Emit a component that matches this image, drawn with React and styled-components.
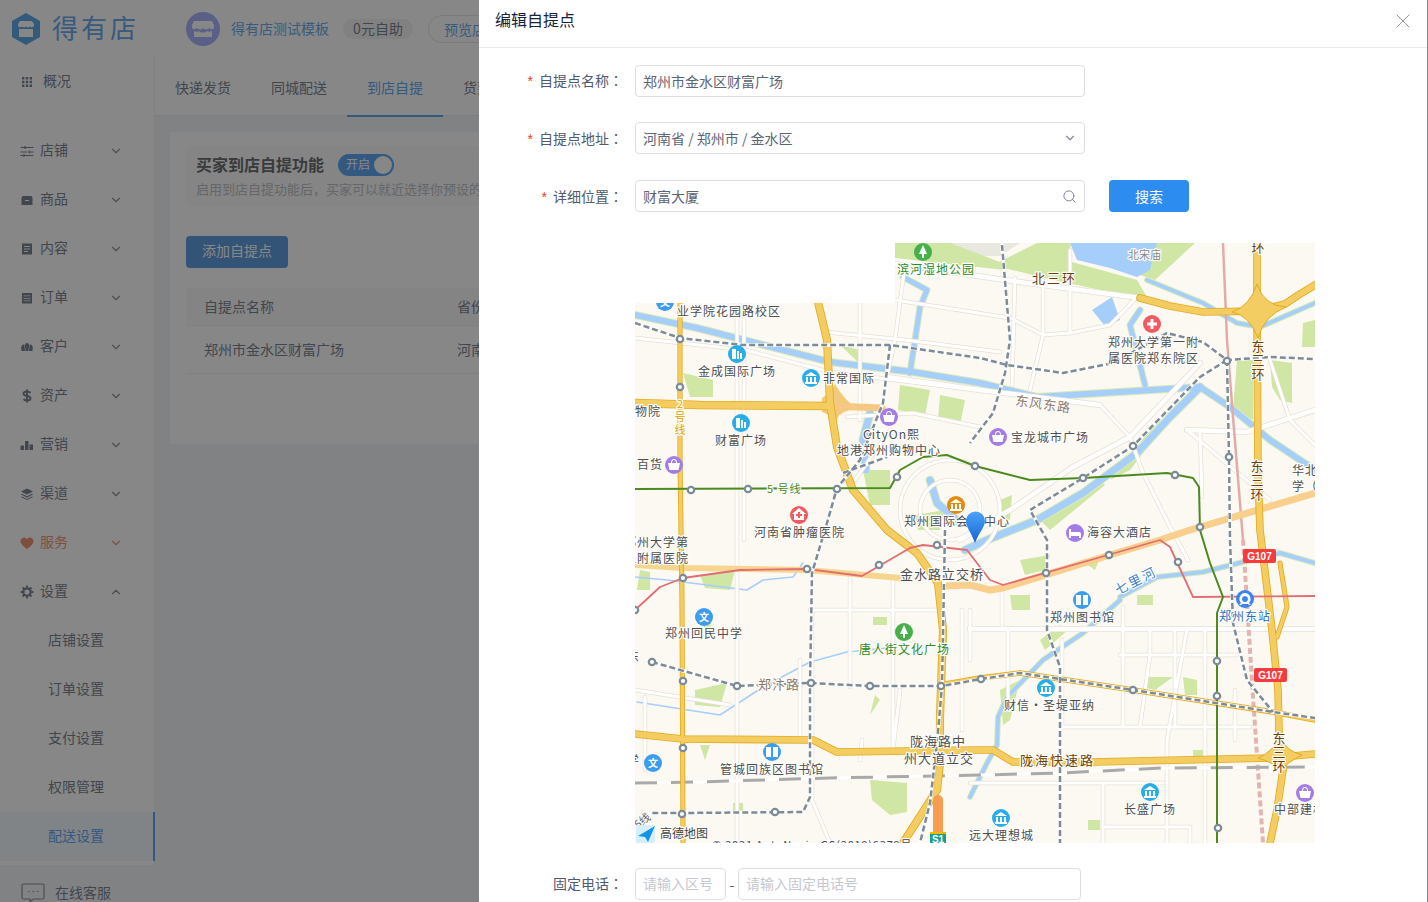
import React from 'react';
import styled, { createGlobalStyle } from 'styled-components';
import { ChevronDown, ChevronUp, X, Search } from 'lucide-react';

const FONT = '"Noto Sans CJK SC", "Noto Sans", "Liberation Sans", sans-serif';

const Global = createGlobalStyle`
  html, body { margin: 0; padding: 0; height: 100%; overflow: hidden; background: #fff; }
  * { box-sizing: border-box; }
  body { font-family: ${FONT}; font-size: 14px; color: #515a6e; text-spacing-trim: space-all; }
`;

const Page = styled.div`position: relative; width: 1428px; height: 902px; overflow: hidden; background: #f0f3f8;`;
const TopBar = styled.header`display: flex; align-items: center; height: 57px; background: #fff; padding-left: 12px;`;
const LogoText = styled.span`margin: -4px 0 0 12px; font-size: 26px; letter-spacing: 3px; color: #3a8ee6; width: 134px; white-space: nowrap;`;
const ShopName = styled.span`margin: -2px 0 0 11px; color: #3a8ee6; font-size: 14px;`;
const Plan = styled.span`margin-left: 14px; width: 70px; height: 20px; border-radius: 10px; background: #f0f0f0; color: #515a6e; font-size: 14px; line-height: 18px; text-align: center;`;
const Preview = styled.span`margin-left: 15px; padding: 0 15px; height: 28px; line-height: 26px; border: 1px solid #dcdee2; border-radius: 14px; color: #3a8ee6; white-space: nowrap;`;
const Body = styled.div`display: flex; height: 845px;`;
const SideColumn = styled.aside`width: 155px; flex: none; display: flex; flex-direction: column;`;
const Nav = styled.nav`height: 812px; background: #fff; border-right: 1px solid #eceef2; display: flex; flex-direction: column;`;
const NavItem = styled.div`
  display: flex; align-items: center; height: 49px; flex: none; padding-left: 20px;
  color: ${p => p.$hot ? '#e8734a' : '#515a6e'};
  margin-bottom: ${p => p.$gapAfter ? '20px' : 0};
  svg.side { flex: none; }
`;
const NavLabel = styled.span`margin: -4px 0 0 ${p => p.$wide ? '9px' : '6px'}; width: 56px; font-size: 14px;`;
const NavChevron = styled.span`display: flex; margin-left: 13px; color: #6b7280;`;
const SubItem = styled.div`
  height: 49px; flex: none; padding-left: 48px; line-height: 47px; font-size: 14px; width: 155px; margin-right: -1px;
  color: ${p => p.$active ? '#2d8cf0' : '#515a6e'};
  background: ${p => p.$active ? '#f0f7ff' : 'transparent'};
  border-right: ${p => p.$active ? '2px solid #2d8cf0' : '0 solid transparent'};
`;
const Service = styled.div`display: flex; align-items: center; padding: 17px 0 0 21px; color: #515a6e; gap: 10px; white-space: nowrap;`;
const Main = styled.main`flex: 1; min-width: 0;`;
const Tabs = styled.div`display: flex; height: 59px; background: #fff; border-bottom: 1px solid #dfe3e8;`;
const Tab = styled.div`
  width: 96px; height: 60px; line-height: 60px; text-align: center; font-size: 14px; flex: none;
  color: ${p => p.$active ? '#2d8cf0' : '#515a6e'};
  border-bottom: ${p => p.$active ? '2px solid #2d8cf0' : '0'};
`;
const Card = styled.section`margin: 16px 16px 0 15px; height: 312px; background: #fff; border-radius: 4px; padding: 14px 16px;`;
const Notice = styled.div`height: 60px; background: #fafafa; padding: 7px 10px; border-radius: 4px;`;
const TitleLine = styled.div`display: flex; align-items: center; height: 22px;`;
const Heading = styled.h3`margin: 0; font-size: 16px; font-weight: 700; color: #3c3f45;`;
const Toggle = styled.div`
  position: relative; margin: 2px 0 0 14px; width: 56px; height: 22px; border-radius: 11px; background: #2d8cf0;
  color: #fff; font-size: 12px; line-height: 20px; padding-left: 8px;
  &::after { content: ''; position: absolute; right: 2px; top: 2px; width: 18px; height: 18px; border-radius: 50%; background: #fff; }
`;
const Hint = styled.p`margin: 5px 0 0; font-size: 13px; line-height: 18px; color: #a8acb3; white-space: nowrap;`;
const AddButton = styled.div`margin-top: 30px; width: 102px; height: 32px; line-height: 28px; border-radius: 4px; text-align: center; color: #fff; background: #2d80d8; font-size: 14px;`;
const Table = styled.div`margin-top: 20px;`;
const TableRow = styled.div`
  display: flex; align-items: center; height: ${p => p.$head ? '38px' : '48px'}; padding-bottom: 2px;
  background: ${p => p.$head ? '#f8f8f9' : '#fff'}; border-bottom: 1px solid #e8eaec; white-space: nowrap; overflow: hidden;
`;
const Cell = styled.div`width: ${p => p.$w}px; flex: none; padding-left: ${p => p.$pl}px;`;

const Mask = styled.div`position: absolute; inset: 0; background: rgba(55,55,55,.6);`;
const Dialog = styled.div`position: absolute; left: 479px; top: 0; width: 948px; height: 902px; background: #fff; overflow: hidden;`;
const DialogHead = styled.div`position: relative; height: 48px; border-bottom: 1px solid #e8eaec; padding: 8px 16px; font-size: 16px; line-height: 22px; color: #17233d;`;
const Close = styled.span`position: absolute; right: 12px; top: 9px; display: flex; color: #999;`;
const Form = styled.div`display: flex; flex-direction: column; padding-top: 17px;`;
const Row = styled.div`display: flex; align-items: center; height: 32px; margin-top: ${p => p.$mt ?? 0}px;`;
const Label = styled.label`width: 156px; flex: none; padding: 0 12px ${p => p.$up ? 2 : 0}px 0; text-align: right; font-size: 14px; line-height: 30px; color: #515a6e; white-space: nowrap; &::before { content: ${p => p.$req ? "'*'" : "''"}; color: #ed4014; margin-right: 6px; font-family: "Liberation Sans", sans-serif; }`;
const Colon = styled.span`font-family: "Noto Sans CJK TC", sans-serif;`;
const Field = styled.div`
  display: flex; align-items: center; justify-content: space-between; height: 32px; width: ${p => p.$w}px; padding: 0 7px ${p => p.$ph ? 2 : 0}px 7px; flex: none;
  border: 1px solid #dcdee2; border-radius: 4px; background: #fff; font-size: 14px; line-height: 28px;
  color: ${p => p.$ph ? '#c5c8ce' : '#5c6477'};
  svg { color: #808695; }
`;
const SearchBtn = styled.div`margin-left: 24px; width: 80px; height: 32px; line-height: 32px; text-align: center; border-radius: 4px; background: #2d8cf0; color: #fff; font-size: 14px;`;
const MapFrame = styled.svg`display: block; margin: 31px 0 0 156px; width: 680px; height: 600px; font-family: ${FONT};`;
const Dash = styled.span`width: 12px; text-align: center; color: #515a6e;`;

const Stroke = styled.polyline`
  fill: none; stroke: ${p => p.$c}; stroke-width: ${p => p.$w}; stroke-linecap: ${p => p.$dash ? 'butt' : 'round'}; stroke-linejoin: round;
  stroke-dasharray: ${p => p.$dash || 'none'};
`;
const Patch = styled.polygon`fill: ${p => p.$c || '#cfe6a4'}; stroke: none;`;
const Blob = styled.path`fill: ${p => p.$c}; stroke: ${p => p.$s || 'none'}; stroke-width: 1;`;
const Station = styled.circle`fill: #fff; stroke: #7c8b95; stroke-width: 2.2;`;
const MapText = styled.text`
  font-size: ${p => p.$s || 12}px; letter-spacing: ${p => p.$ls ?? 1}px; fill: ${p => p.$c || '#4e4e4e'};
  stroke: rgba(255,255,255,.92); stroke-width: 2.4px; paint-order: stroke; stroke-linejoin: round;
  writing-mode: ${p => p.$v ? 'vertical-rl' : 'horizontal-tb'};
  text-orientation: upright;
`;
const PoiDisc = styled.circle`fill: ${p => p.$c};`;
const Glyph = styled.text`font-size: 10px; fill: #fff; text-anchor: middle; font-weight: 700;`;
const Shield = styled(Glyph)`font-family: "Liberation Sans", sans-serif;`;
const WhiteMark = styled.path`fill: #fff;`;
const LogoBadge = styled.svg`flex: none; display: block;`;

const ring = (cx, cy, r) => Array.from({ length: 41 }, (_, i) => {
  const a = (i / 40) * Math.PI * 2;
  return `${(cx + r * Math.cos(a)).toFixed(1)},${(cy + r * Math.sin(a)).toFixed(1)}`;
}).join(' ');

const majors = [
  ['1140,298 1170,306 1203,312 1257,311 1285,304 1300,294 1315,285', 6],
  ['1257,243 1257,320 1258,470 1260,530 1266,580 1272,630 1278,690 1279,730 1283,770 1277,810 1270,843', 6],
  ['1280,563 1287,607 1277,637', 3.5],
  ['818,302 827,340 830,403 837,447 853,490 887,530 917,553 938,583 943,630 940,717 940,763 937,790 910,832 903,843', 6.5],
  ['635,403 700,405 830,406', 7],
  ['680,303 680,460 682,600 683,843', 3.5],
  ['635,734 683,739 813,740 837,752 980,750 993,750 1013,762 1093,762 1270,758 1315,754', 6],
  ['940,685 980,678 1020,673 1133,690 1273,712 1315,720', 4],
];
const softRoads = [
  ['635,565 683,568 807,570 900,578', 6, '#f6d68e'],
  ['945,586 970,585 990,590 1003,588 1110,555 1160,540 1190,530 1315,493', 7, '#f8cf8d'],
  ['832,406 882,408', 7, '#f5c883'],
];
const rivers = [
  ['635,315 697,328 830,362 913,372 980,383 1037,397 1103,393 1200,387 1230,407 1270,440 1315,470', 6],
  ['1200,387 1170,417 1137,453 1083,493 1037,520 987,540 965,550', 7],
  ['1147,280 1203,303 1237,323 1260,327 1315,303', 4],
  ['903,277 927,290 920,307 913,353 910,373', 5],
  ['870,413 863,440 866,470', 7],
  ['930,480 937,503 960,523', 7],
  ['1120,597 1157,577 1203,572 1243,562 1280,553 1315,563', 4],
  ['1120,600 1083,633 1043,660 1007,697 998,717 997,745 987,763 970,797', 4],
  ['1140,310 1130,325 1145,385', 5],
];
const streams = [
  '635,577 667,580 747,590 763,580 793,577 803,563',
  '637,702 720,715 763,687 810,662 847,652 897,647',
  '1320,565 1275,553',
];
const wideLanes = [
  '895,264 1005,280 1140,298', '1200,363 1130,437 1073,467 1010,510 960,540', '970,629 1315,629', '887,377 980,390 1100,405', '1187,430 1247,432 1315,410',
];
const lanes = [
  '895,300 1010,318 1043,335 1070,333 1110,325 1137,297',
  '635,338 745,350 830,372 960,388', '825,332 905,340 1000,352', '1100,405 1130,437 1143,473 1170,527 1188,560',
  '847,417 913,413 980,427', '1200,430 1202,497',
  '810,610 940,610', '850,577 850,687', '893,580 893,747', '737,303 737,843', '744,303 744,540', '812,610 812,800',
  '1120,655 1237,655', '1062,727 1250,727', '1123,607 1123,727', '1150,629 1150,655 1140,727', '1187,629 1167,740 1167,843',
  '970,783 1163,783', '1103,783 1103,843', '1103,827 1190,827', '1190,827 1190,843', '635,690 730,705', '645,697 645,770',
  '1187,430 1270,500', '860,300 860,420', '905,265 895,340 887,377', '1043,280 1043,335 1030,390', '1070,250 1070,333', '1015,278 1012,385',
  '1270,360 1290,420 1315,445', '1008,700 1008,630', '1062,640 1062,727', '1175,629 1175,727', '1205,629 1205,843', '970,610 970,660',
  '1002,585 1002,625', '962,610 962,730', '800,660 800,740', '900,690 893,750', '862,740 860,760', '812,800 830,843', '855,480 890,430', '1235,690 1235,740',
  ring(950, 510, 50), ring(950, 510, 30),
];
const metro = [
  '635,323 680,338 743,345 890,345 980,358 1007,365 1063,373 1113,363 1167,333 1203,342 1227,360 1270,357 1315,359',
  '1002,245 1010,340 1005,373 993,413 970,443',
  '890,345 883,403 860,460 837,488 827,523 812,573 810,683 810,797 803,812 682,813 650,813',
  '843,473 887,457',
  '1227,360 1200,377 1133,446 1083,478 1030,510 1047,540 1047,630 1060,667 1060,843',
  '1227,360 1229,457 1230,540 1233,623 1247,680 1273,712',
  '652,662 737,686 810,683 870,686 942,686 981,679 1020,673 1133,690 1273,712 1315,718',
  '945,530 942,686 937,743 930,803 920,843',
];
const stations = [
  [680,339],[680,387],[691,490],[748,489],[837,489],[897,477],[975,466],[1227,361],[1133,446],[1229,457],[1083,478],[1175,475],[1200,527],
  [635,610],[683,578],[807,569],[879,565],[937,545],[652,662],[683,681],[737,686],[811,683],[870,686],[941,686],[683,748],[682,814],[775,812],
  [1109,555],[1046,573],[1178,562],[1217,661],[1217,696],[981,679],[1133,690],[1218,828],
];
const greens = [
  '895,243 950,243 1000,262 1005,270 895,258','993,265 1037,243 1070,243 1072,262 1137,280 1147,297 1100,290 1040,277','1157,243 1195,243 1155,280 1140,275',
  '1237,360 1253,360 1253,420 1233,410','1270,360 1292,363 1292,403 1280,400 1272,387','1303,323 1315,320 1315,347 1302,347',
  '683,373 713,380 713,397 690,397','863,470 890,470 890,505 870,505','900,385 930,390 925,415 898,410','940,395 965,400 960,425 938,420','840,345 860,350 858,362',
  '873,617 887,617 887,625 873,625','870,780 907,783 907,812 890,815 872,800','733,803 743,803 743,813 733,813','695,690 727,683 720,707 695,705',
  '1147,677 1173,677 1155,690 1147,688','1183,677 1197,680 1197,695 1185,695','1088,820 1100,820 1100,830 1088,830','1193,750 1205,750 1205,757 1193,757',
  '1137,595 1153,595 1153,605 1137,605','640,570 650,572 650,590 637,590','700,575 735,570 730,590 705,588','1010,595 1030,595 1030,610 1012,610','1080,560 1100,558 1095,570',
  '1110,480 1150,430 1160,420 1165,425 1130,470','1040,520 1100,480 1105,485 1050,530','915,515 945,510 940,530 918,530','1000,500 1012,495 1010,520 1002,518',
  '875,695 880,700 870,715','700,745 710,745 705,760','702,620 712,618 708,640','1040,640 1060,625 1068,630 1045,650','1000,690 1020,680 1010,720 1003,725','1020,560 1050,555 1045,570 1025,575',
];

const Poi = ({ x, y, c, kind }) => (
  <g>
    <PoiDisc cx={x} cy={y} r={9} $c={c} />
    {kind === 'wen' && <Glyph x={x} y={y + 4}>文</Glyph>}
    {kind === 'plus' && <WhiteMark d={`M${x-5} ${y-1.5}h3.5v-3.5h3v3.5h3.5v3h-3.5v3.5h-3v-3.5h-3.5z`} />}
    {kind === 'tree' && <WhiteMark d={`M${x} ${y-7}l4 9h-3v4h-2v-4h-3z`} />}
    {kind === 'tower' && <WhiteMark d={`M${x-5} ${y+5}v-10h4v10zM${x} ${y+5}v-8h2v8zM${x+3} ${y+5}v-6h2v6z`} />}
    {kind === 'bank' && <WhiteMark d={`M${x} ${y-6}l6 4h-12zM${x-5} ${y-1}h2v5h-2zM${x-1} ${y-1}h2v5h-2zM${x+3} ${y-1}h2v5h-2zM${x-6} ${y+4}h12v2h-12z`} />}
    {kind === 'bag' && <WhiteMark d={`M${x-6} ${y-2}h12l-1.5 7h-9zM${x-3} ${y-2}a3 4 0 0 1 6 0h-1a2 3 0 0 0-4 0z`} />}
    {kind === 'bed' && <WhiteMark d={`M${x-6} ${y-4}h2v3h8a2 2 0 0 1 2 2v4h-2v-2h-8v2h-2z`} />}
    {kind === 'book' && <WhiteMark d={`M${x-6} ${y-5}h5v10h-5zM${x+1} ${y-5}h5v10h-5z`} />}
    {kind === 'hosp' && <WhiteMark d={`M${x} ${y-7}l7 6h-2v6h-10v-6h-2zM${x-1} ${y-3}v2h-2v2h2v2h2v-2h2v-2h-2v-2z`} />}
    {kind === 'rail' && <WhiteMark fillRule="evenodd" d={`M${x} ${y-6}a6 6 0 0 1 4 10l2 2h-2l-1-1h-6l-1 1h-2l2-2a6 6 0 0 1 4-10zm0 3a3 3 0 1 0 .01 0z`} />}
  </g>
);

const pois = [
  [923,252,'#46b04a','tree'],[1152,324,'#f25a5f','plus'],[737,354,'#27aee8','tower'],[811,378,'#27aee8','bank'],[741,423,'#27aee8','tower'],
  [889,417,'#a37ce8','bag'],[674,465,'#a37ce8','bag'],[799,515,'#f25a5f','hosp'],[956,505,'#e58a10','bank'],[998,437,'#a37ce8','bag'],[1075,533,'#a37ce8','bed'],
  [704,617,'#3b9cf0','wen'],[904,632,'#46b04a','tree'],[1082,600,'#3b9cf0','book'],[1245,599,'#3b84f0','rail'],[1046,688,'#27aee8','bank'],
  [772,752,'#3b9cf0','book'],[653,763,'#3b9cf0','wen'],[1150,792,'#27aee8','bank'],[1001,818,'#27aee8','bank'],[1305,793,'#a37ce8','bag'],[665,302,'#3b9cf0','wen'],
];
const BROWN = '#6e3f08';
const GREEN = '#2b8a1c';
const TAN = '#8c7a68';
/* text, x, y (baseline), colour, size, letter spacing */
const labels = [
  ['滨河湿地公园',897,274,GREEN],['北三环',1032,283,BROWN,13,2],['北宋庙',1128,259,'#8a8a8a',11,0],['业学院花园路校区',677,316],
  ['郑州大学第一附',1108,347],['属医院郑东院区',1108,363],['金成国际广场',698,376],['非常国际',823,383],['物院',635,416],['财富广场',715,445],
  ['CityOn熙',863,439],['地港郑州购物中心',837,455],['宝龙城市广场',1011,442],['百货',637,469],['郑州国际会',904,526],['中心',984,526],['河南省肿瘤医院',754,537],
  ['海容大酒店',1087,537],['华北',1292,475],['学（水',1292,491],['郑州大学第',624,547],['二附属医院',624,563],['金水路立交桥',900,579,undefined,13,1],['郑州回民中学',665,638],
  ['唐人街文化广场',859,654,GREEN],['郑州图书馆',1050,622],['郑州东站',1219,621,'#1c6fc4'],['郑汴路',758,689,TAN,13,1],['财信・圣堤亚纳',1004,710],
  ['陇海路中',910,746,undefined,13,1],['州大道立交',904,763,undefined,13,1],['陇海快速路',1020,765,BROWN,13,2],['管城回族区图书馆',720,774],['长盛广场',1124,814],['中部建材',1274,814],['远大理想城',969,840],
  ['高德地图',660,838,'#444',12,0],['© 2021 AutoNavi - GS(2019)6379号',712,849,'#444',11,0.8],['东',627,661],['学',627,765],
];
/* stacked road names: text, axis x, top y, colour, size, letter spacing */
const stacked = [
  ['环',1258,241,BROWN,13,1],['东三环',1258,340,BROWN,13,1],['东三环',1257,460,BROWN,13,1],['东三环',1279,732,BROWN,13,1],['2号线',680,398,'#d9a400',11,2],
];

const MapDrawing = () => (
  <MapFrame viewBox="635 243 680 600" role="img" aria-label="高德地图">
    <defs>
      <linearGradient id="pin" x1="0" y1="0" x2="0" y2="1"><stop offset="0" stopColor="#4aa3fb" /><stop offset="1" stopColor="#1766cf" /></linearGradient>
    </defs>
    <rect x="635" y="243" width="680" height="600" fill="#fcf9f2" />
    <Patch points="943,243 1020,243 1000,256 960,256" $c="#e8e7e0" />
    {greens.map(g => <Patch key={g} points={g} />)}
    <Patch points="1070,243 1157,243 1150,270 1137,277 1110,268 1077,260" $c="#a6cefb" />
    <Patch points="1092,310 1112,297 1120,320 1105,326" $c="#a6cefb" />
    {rivers.map(([p, w]) => <Stroke key={p + 'g'} points={p} $c="#d9eab9" $w={w + 2} />)}
    {rivers.map(([p, w]) => <Stroke key={p} points={p} $c="#a6cefb" $w={w} />)}
    {streams.map(p => <Stroke key={p} points={p} $c="#a6cefb" $w={1.5} />)}
    {lanes.map(p => <Stroke key={p + 'c'} points={p} $c="#e6e0d4" $w={4.4} />)}
    {wideLanes.map(p => <Stroke key={p + 'c'} points={p} $c="#e6e0d4" $w={6} />)}
    {lanes.map(p => <Stroke key={p} points={p} $c="#ffffff" $w={3} />)}
    {wideLanes.map(p => <Stroke key={p} points={p} $c="#ffffff" $w={4.5} />)}
    <Stroke points="1223,243 1227,340 1233,417 1243,540" $c="#e2abaa" $w={2.5} />
    <Stroke points="1243,540 1253,697 1263,843" $c="#e4b4b1" $w={4} $dash="6 3" />
    <Stroke points="635,783 697,782 830,778 980,775 1060,773 1163,768 1315,767" $c="#ffffff" $w={3} />
    <Stroke points="635,783 697,782 830,778 980,775 1060,773 1163,768 1315,767" $c="#a9a9a9" $w={3} $dash="22 14" />
    <Blob d="M822 398 Q832 392 835 384 Q842 396 850 403 L850 410 Q838 412 835 424 Q830 414 822 412Z" $c="#f3c97c" />
    {softRoads.map(([p, w, c]) => <Stroke key={p} points={p} $c={c} $w={w} />)}
    {majors.map(([p, w]) => <Stroke key={p + 'c'} points={p} $c="#e3a91e" $w={w + 1.6} />)}
    {majors.map(([p, w]) => <Stroke key={p} points={p} $c="#f3cd62" $w={w} />)}
    <Blob d="M1232 312 Q1250 306 1257 284 Q1264 306 1286 307 Q1264 316 1258 338 Q1250 316 1232 312Z" $c="#f3cd62" $s="#e3a91e" />
    <Blob d="M1258 758 Q1272 752 1280 738 Q1288 752 1302 755 Q1288 762 1281 770 Q1272 762 1258 758Z" $c="#f3cd62" $s="#e3a91e" />
    <Stroke points="938,800 938,833" $c="#f79c50" $w={10} />
    <Stroke points="635,610 660,587 683,578 740,570 807,569 862,576 910,548 923,545 967,550 980,567 990,580 1003,585 1108,555 1160,540 1170,547 1193,597 1315,596" $c="#e26d73" $w={1.8} />
    <Stroke points="635,489 890,488 900,470 923,457 947,455 975,466 1030,480 1083,478 1167,473 1193,478 1199,487 1200,530 1210,563 1223,597 1217,613 1217,843" $c="#4a8a1e" $w={2} />
    {metro.map(p => <Stroke key={p} points={p} $c="#fff" $w={3.5} />)}
    {metro.map(p => <Stroke key={p + 'd'} points={p} $c="#7c8b95" $w={2.5} $dash="6 3" />)}
    {stations.map(([x, y]) => <Station key={x + '-' + y} cx={x} cy={y} r={3.2} />)}
    {pois.map(([x, y, c, k]) => <Poi key={x + '-' + y} x={x} y={y} c={c} kind={k} />)}
    {labels.map(([t, x, y, c, s, ls]) => <MapText key={t + x + y} x={x} y={y} $c={c} $s={s} $ls={ls}>{t}</MapText>)}
    {stacked.map(([t, x, y, c, s, ls]) => <MapText key={t + x + y} x={x} y={y} $c={c} $s={s} $ls={ls} $v>{t}</MapText>)}
    <MapText x="1015" y="405" $c={TAN} $s={13} transform="rotate(8 1015 405)">东风东路</MapText>
    <MapText x="1118" y="595" $c="#3d7fc9" $s={13} $ls={2} transform="rotate(-27 1118 595)">七里河</MapText>
    <MapText x="767" y="493" $c="#4a8a1e" $s={11} $ls={1}>5 号线</MapText>
    <MapText x="638" y="829" $c="#666" $s={11} $ls={0} transform="rotate(-38 638 829)">5线</MapText>
    <rect x="1243" y="549" width="33" height="14" rx="2" fill="#f53b3b" />
    <Shield x="1259.5" y="560">G107</Shield>
    <rect x="1254" y="668" width="33" height="14" rx="2" fill="#f53b3b" />
    <Shield x="1270.5" y="679">G107</Shield>
    <rect x="930" y="833" width="16" height="12" fill="#10a38a" />
    <rect x="930" y="832" width="16" height="2" fill="#f7b500" />
    <Shield x="938" y="843">S1</Shield>
    <path d="M975 543 C971 532 966 527 966 521 A9.500 9.500 0 0 1 985 521 C985 527 979 532 975 543Z" fill="url(#pin)" />
    <rect x="636" y="825" width="19" height="18" rx="2" fill="#d5eff8" />
    <path d="M655 826 L638 836 L645 837 L648 842Z" fill="#1593e5" />
    <rect x="635" y="243" width="260" height="60" fill="#fff" />
  </MapFrame>
);

const ic = { className: 'side', width: 14, height: 14, viewBox: '0 0 14 14', fill: 'currentColor' };
const Icons = {
  grid: <svg {...ic}><path d="M2 2h2.400v2.400H2zM5.800 2h2.400v2.400H5.800zM9.600 2H12v2.400H9.600zM2 5.800h2.400v2.400H2zM5.800 5.800h2.400v2.400H5.800zM9.600 5.800H12v2.400H9.600zM2 9.600h2.400V12H2zM5.800 9.600h2.400V12H5.800zM9.600 9.600H12V12H9.600z" /></svg>,
  tune: <svg {...ic} fill="none" stroke="currentColor" strokeWidth="1.100"><path d="M0.500 3.500h13M0.500 8h6.500M0.500 11.500h13M9 8h4.500M5 2v3M9 6.500v3M4 10v3" /></svg>,
  box: <svg {...ic}><path d="M2.500 3h9l1 2v7h-11V5zM5 7v1h4V7z" fillRule="evenodd" /></svg>,
  doc: <svg {...ic}><path d="M2 1.500h10v11H2zM4 4v1h6V4zM4 6.500v1h6v-1zM4 9v1h4V9z" fillRule="evenodd" /></svg>,
  list: <svg {...ic}><path d="M2 2h10v10.500H2zM3.500 4.500v.8h7v-.8zM3.500 7v.8h7V7zM3.500 9.500v.8h7v-.8z" fillRule="evenodd" /></svg>,
  users: <svg {...ic}><path d="M7 3a2 2 0 0 1 2 2v2a2 2 0 0 1-.5 1.400v2.600h-3V8.400A2 2 0 0 1 5 7V5a2 2 0 0 1 2-2zM3.500 4.500a1.500 1.500 0 0 1 1 .4V7c0 .6.1 1 .4 1.500V11H1.500V9.500C0.800 9 1 5 3.500 4.500zM10.500 4.500c2.500.5 2.700 4.500 2 5V11H9.100V8.500c.3-.5.4-.9.4-1.500V4.900a1.500 1.500 0 0 1 1-.4z" /></svg>,
  money: <svg {...ic} fill="none" stroke="currentColor" strokeWidth="1.900"><path d="M10.500 3.800C9.800 2.900 8.500 2.500 7 2.500 5 2.500 3.500 3.400 3.500 4.800 3.500 8 10.500 6 10.500 9.200 10.500 10.600 9 11.500 7 11.500 5.500 11.500 4.200 11 3.500 10.200M7 .5v13" /></svg>,
  bars: <svg {...ic}><path d="M0.500 7.500h3.500v4.500H.5zM5 3h3.500v9H5zM9.500 6.500h3.500V12H9.500z" /></svg>,
  layers: <svg {...ic}><path d="M7 1.500l6 3-6 3-6-3zM2 6.800l5 2.500 5-2.500 1 .6-6 3-6-3zM2 9.500l5 2.500 5-2.500 1 .6-6 3-6-3z" /></svg>,
  heart: <svg {...ic}><path d="M7 13C3 10 .5 8 .5 5A3.500 3.500 0 0 1 7 3.200 3.500 3.500 0 0 1 13.500 5c0 3-2.500 5-6.500 8z" /></svg>,
  gear: <svg {...ic} fill="none" stroke="currentColor" strokeWidth="2.200"><circle cx="7" cy="7" r="3.700" /><path strokeWidth="1.800" d="M7 .6v2M7 11.400v2M.6 7h2M11.400 7h2M2.500 2.500l1.400 1.400M10.100 10.100l1.400 1.400M2.500 11.500l1.400-1.400M10.100 3.900l1.400-1.400" /></svg>,
};

const menu = [
  ['tune', '店铺'], ['box', '商品'], ['doc', '内容'], ['list', '订单'], ['users', '客户'],
  ['money', '资产'], ['bars', '营销'], ['layers', '渠道'], ['heart', '服务', true], ['gear', '设置', false, true],
];

export default function App() {
  return (
    <Page>
      <Global />
      <TopBar>
        <LogoBadge width="28" height="32" viewBox="0 0 28 32">
          <path d="M14 0l14 8v16l-14 8L0 24V8z" fill="#2d8ce0" />
          <path d="M6 11l2-3h12l2 3v2a2.500 2.500 0 0 1-4 .5 3 3 0 0 1-4 0 3 3 0 0 1-4 0A2.500 2.500 0 0 1 6 13zM7 16h14v8H7z" fill="#fff" />
        </LogoBadge>
        <LogoText>得有店</LogoText>
        <LogoBadge width="34" height="34" viewBox="0 0 34 34">
          <circle cx="17" cy="17" r="17" fill="#8f9bff" />
          <path d="M8 9h18l2 4v3c-2 2-4 1-5 0-2 2-4 2-6 0-2 2-4 2-6 0-1 1-3 2-5 0v-3zM8 19c2 1 4 1 5 0 2 2 6 2 8 0 1 1 3 1 5 0v6H8z" fill="#fff" />
        </LogoBadge>
        <ShopName>得有店测试模板</ShopName>
        <Plan>0元自助</Plan>
        <Preview>预览店铺</Preview>
      </TopBar>
      <Body>
        <SideColumn>
          <Nav>
            <NavItem $gapAfter>{Icons.grid}<NavLabel $wide>概况</NavLabel></NavItem>
            {menu.map(([k, t, hot, open]) => (
              <NavItem key={t} $hot={hot}>
                {Icons[k]}
                <NavLabel>{t}</NavLabel>
                <NavChevron>{open ? <ChevronUp size={14} /> : <ChevronDown size={14} color={hot ? '#e8734a' : undefined} />}</NavChevron>
              </NavItem>
            ))}
            <SubItem>店铺设置</SubItem>
            <SubItem>订单设置</SubItem>
            <SubItem>支付设置</SubItem>
            <SubItem>权限管理</SubItem>
            <SubItem $active>配送设置</SubItem>
          </Nav>
          <Service>
            <svg width="24" height="19" viewBox="0 0 24 19" fill="none" stroke="#6e6e6e" strokeWidth="1.200">
              <path d="M2.500 1h19A1.500 1.500 0 0 1 23 2.500v12a1.500 1.500 0 0 1-1.500 1.500h-9L9 18.500V16H2.500A1.500 1.500 0 0 1 1 14.500v-12A1.500 1.500 0 0 1 2.500 1z" />
              <path d="M7 8.500h1.500M11.500 8.500H13M16 8.500h1.500" />
            </svg>
            在线客服
          </Service>
        </SideColumn>
        <Main>
          <Tabs>
            <Tab>快递发货</Tab>
            <Tab>同城配送</Tab>
            <Tab $active>到店自提</Tab>
            <Tab>货到付款</Tab>
          </Tabs>
          <Card>
            <Notice>
              <TitleLine>
                <Heading>买家到店自提功能</Heading>
                <Toggle>开启</Toggle>
              </TitleLine>
              <Hint>启用到店自提功能后，买家可以就近选择你预设的自提点提货</Hint>
            </Notice>
            <AddButton>添加自提点</AddButton>
            <Table>
              <TableRow $head>
                <Cell $w={271} $pl={18}>自提点名称</Cell>
                <Cell $w={200} $pl={0}>省份</Cell>
              </TableRow>
              <TableRow>
                <Cell $w={271} $pl={18}>郑州市金水区财富广场</Cell>
                <Cell $w={200} $pl={0}>河南省</Cell>
              </TableRow>
            </Table>
          </Card>
        </Main>
      </Body>
      <Mask />
      <Dialog>
        <DialogHead>
          编辑自提点
          <Close><X size={24} strokeWidth={1} /></Close>
        </DialogHead>
        <Form>
          <Row>
            <Label $req $up>自提点名称<Colon>：</Colon></Label>
            <Field $w={450}>郑州市金水区财富广场</Field>
          </Row>
          <Row $mt={25}>
            <Label $req>自提点地址<Colon>：</Colon></Label>
            <Field $w={450}>河南省 / 郑州市 / 金水区<ChevronDown size={14} /></Field>
          </Row>
          <Row $mt={26}>
            <Label $req>详细位置<Colon>：</Colon></Label>
            <Field $w={450}>财富大厦<Search size={15} strokeWidth={1.6} /></Field>
            <SearchBtn>搜索</SearchBtn>
          </Row>
          <MapDrawing />
          <Row $mt={25}>
            <Label $up>固定电话<Colon>：</Colon></Label>
            <Field $w={91} $ph>请输入区号</Field>
            <Dash>-</Dash>
            <Field $w={343} $ph>请输入固定电话号</Field>
          </Row>
        </Form>
      </Dialog>
    </Page>
  );
}
